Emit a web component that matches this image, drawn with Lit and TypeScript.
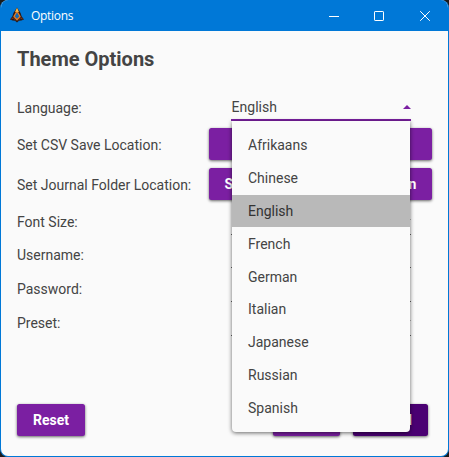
import { LitElement, html, css, svg } from "lit";
import { customElement, property } from "lit/decorators.js";
import { classMap } from "lit/directives/class-map.js";

@customElement("title-bar")
class TitleBar extends LitElement {
  static styles = css`
    :host {
      display: flex;
      align-items: center;
      height: 31px;
      box-sizing: border-box;
      background: #0078d7;
      color: #fff;
      font: 12px "Open Sans", "Noto Sans", sans-serif;
      flex: none;
    }
    .logo {
      width: 16px;
      height: 16px;
      margin: 0 6px 2px 8px;
    }
    .name {
      flex: 1;
      letter-spacing: -0.3px;
    }
    .controls {
      display: flex;
      height: 31px;
    }
    .control {
      width: 45px;
      display: grid;
      place-items: center;
    }
    .control:last-child {
      width: 47px;
    }
    .controls svg {
      width: 12px;
      height: 12px;
      display: block;
    }
  `;
  render() {
    const glyphs = [
      svg`<path d="M1 6.5h10" stroke="#fff"/>`,
      svg`<rect x="1.5" y="1.5" width="9" height="9" rx=".6" fill="none" stroke="#fff"/>`,
      svg`<path d="M1.2 1.2l9.6 9.6M10.8 1.2l-9.6 9.6" stroke="#fff"/>`,
    ];
    return html`
      <svg class="logo" viewBox="0 0 16 16">
        <path d="M8 .5 11.6 6l1 3.2 2.4 3.2-2.6 1-2.4.4L8 15.6l-2-1.8-2.4-.4-2.6-1 2.4-3.2 1-3.2z" fill="#2a1a18" />
        <path d="M8 4.2 11 9.4 8 12.8 5 9.4z" fill="#1268b4" stroke="#e87a20" stroke-width="1.3" />
        <path d="M8 .8 10 5 8 4.8 6 5z" fill="#ffbc48" />
        <path d="M2.4 12 4.2 10.8 6.6 13M13.6 12 11.8 10.8 9.4 13" fill="none" stroke="#8e3c1c" />
      </svg>
      <span class="name">Options</span>
      <div class="controls">
        ${glyphs.map((g) => html`<span class="control"><svg viewBox="0 0 12 12">${g}</svg></span>`)}
      </div>
    `;
  }
}

@customElement("raised-button")
class RaisedButton extends LitElement {
  @property({ type: Boolean, reflect: true }) focused = false;
  static styles = css`
    :host {
      display: flex;
      align-items: center;
      justify-content: center;
      height: 32px;
      box-sizing: border-box;
      border-radius: 2.5px;
      background: #7b1fa2;
      color: #fff;
      font-weight: 700;
      white-space: nowrap;
      box-shadow: 0 1px 3px rgba(0, 0, 0, 0.6);
    }
    :host([focused]) {
      background: #4a0072;
    }
  `;
  render() {
    return html`<slot></slot>`;
  }
}

@customElement("language-menu")
class LanguageMenu extends LitElement {
  @property() value = "";
  @property({ attribute: false }) items: string[] = [];
  static styles = css`
    :host {
      display: block;
      box-sizing: border-box;
      padding: 8.2px 0 7px;
      background: #fafafa;
      border-radius: 0 0 4px 4px;
      box-shadow: 0 1px 4px rgba(0, 0, 0, 0.6);
      color: #444;
    }
    .item {
      height: 32.86px;
      line-height: 33px;
      padding-left: 16px;
    }
    .selected {
      background: linear-gradient(#b9b9b9, #b9b9b9) 0 0 / 100% 32px no-repeat;
      color: #333;
    }
  `;
  render() {
    return this.items.map(
      (name) => html`<div class=${classMap({ item: true, selected: name === this.value })}>${name}</div>`
    );
  }
}

@customElement("app-root")
class AppRoot extends LitElement {
  private languages = ["Afrikaans", "Chinese", "English", "French", "German", "Italian", "Japanese", "Russian", "Spanish"];
  private fields = [
    { label: "Font Size:", drop: true, align: "low" },
    { label: "Username:", drop: false, align: "mid" },
    { label: "Password:", drop: false, align: "lower" },
    { label: "Preset:", drop: true, align: "lower" },
  ];

  static styles = css`
    :host {
      display: block;
      width: 449px;
      height: 457px;
      background: #1b1b1b;
      font: 14px Roboto, sans-serif;
      color: #444;
    }
    .window {
      height: 457px;
      box-sizing: border-box;
      display: flex;
      flex-direction: column;
      border: 1px solid #0078d7;
      border-top: 0;
      border-radius: 8px;
      overflow: hidden;
      background: #fafafa;
    }
    .content {
      flex: 1;
      display: flex;
      flex-direction: column;
      padding: 0 16px 20px;
    }
    h1 {
      margin: 0;
      height: 57px;
      line-height: 57px;
      font-size: 20px;
      font-weight: 700;
    }
    .form {
      display: grid;
      grid-template-columns: 192px 223px;
      grid-template-rows: 36px 40px 40px 31px 33px 34px 34px;
      align-items: center;
    }
    .label {
      white-space: nowrap;
      line-height: 16px;
      padding-top: 2px;
    }
    .label.low {
      padding-top: 4px;
    }
    .label.mid {
      padding-top: 6px;
    }
    .label.lower {
      padding-top: 8px;
    }
    .field {
      display: flex;
      justify-content: flex-end;
      align-items: center;
      width: 180px;
      margin-left: 22px;
      box-sizing: border-box;
      align-self: end;
      height: 28px;
      border-bottom: 1px solid #666;
    }
    .select {
      position: relative;
      z-index: 1;
      justify-content: space-between;
      border-bottom: 2px solid #7b1fa2;
      align-self: start;
      height: 33px;
      padding: 6px 0 0 0.6px;
    }
    .arrow {
      width: 8px;
      height: 4px;
      fill: #777;
    }
    .select .arrow {
      fill: #7b1fa2;
    }
    .menu {
      position: absolute;
      left: 1px;
      top: 33px;
      width: 178px;
      height: 311px;
    }
    .footer {
      margin-top: auto;
      display: flex;
    }
    .reset {
      width: 68px;
      margin-right: auto;
    }
    .save {
      width: 67px;
      margin-right: 13px;
    }
    .cancel {
      width: 75px;
      margin-right: 4px;
    }
  `;

  render() {
    return html`
      <div class="window">
        <title-bar></title-bar>
        <div class="content">
          <h1>Theme Options</h1>
          <div class="form">
            <span class="label low">Language:</span>
            <div class="field select">
              <span>English</span>
              <svg class="arrow" viewBox="0 0 8 4"><path d="M0 4 4 0l4 4z" /></svg>
              <language-menu class="menu" .items=${this.languages} value="English"></language-menu>
            </div>
            <span class="label">Set CSV Save Location:</span>
            <raised-button>Select CSV Location</raised-button>
            <span class="label">Set Journal Folder Location:</span>
            <raised-button>Select Journal Folder Location</raised-button>
            ${this.fields.map(
              (f) => html`<span class="label ${f.align}">${f.label}</span>
                <span class="field">
                  ${f.drop ? html`<svg class="arrow" viewBox="0 0 8 4"><path d="M0 0h8L4 4z" /></svg>` : ""}
                </span>`
            )}
          </div>
          <div class="footer">
            <raised-button class="reset">Reset</raised-button>
            <raised-button class="save">Save</raised-button>
            <raised-button class="cancel" focused>Cancel</raised-button>
          </div>
        </div>
      </div>
    `;
  }
}
